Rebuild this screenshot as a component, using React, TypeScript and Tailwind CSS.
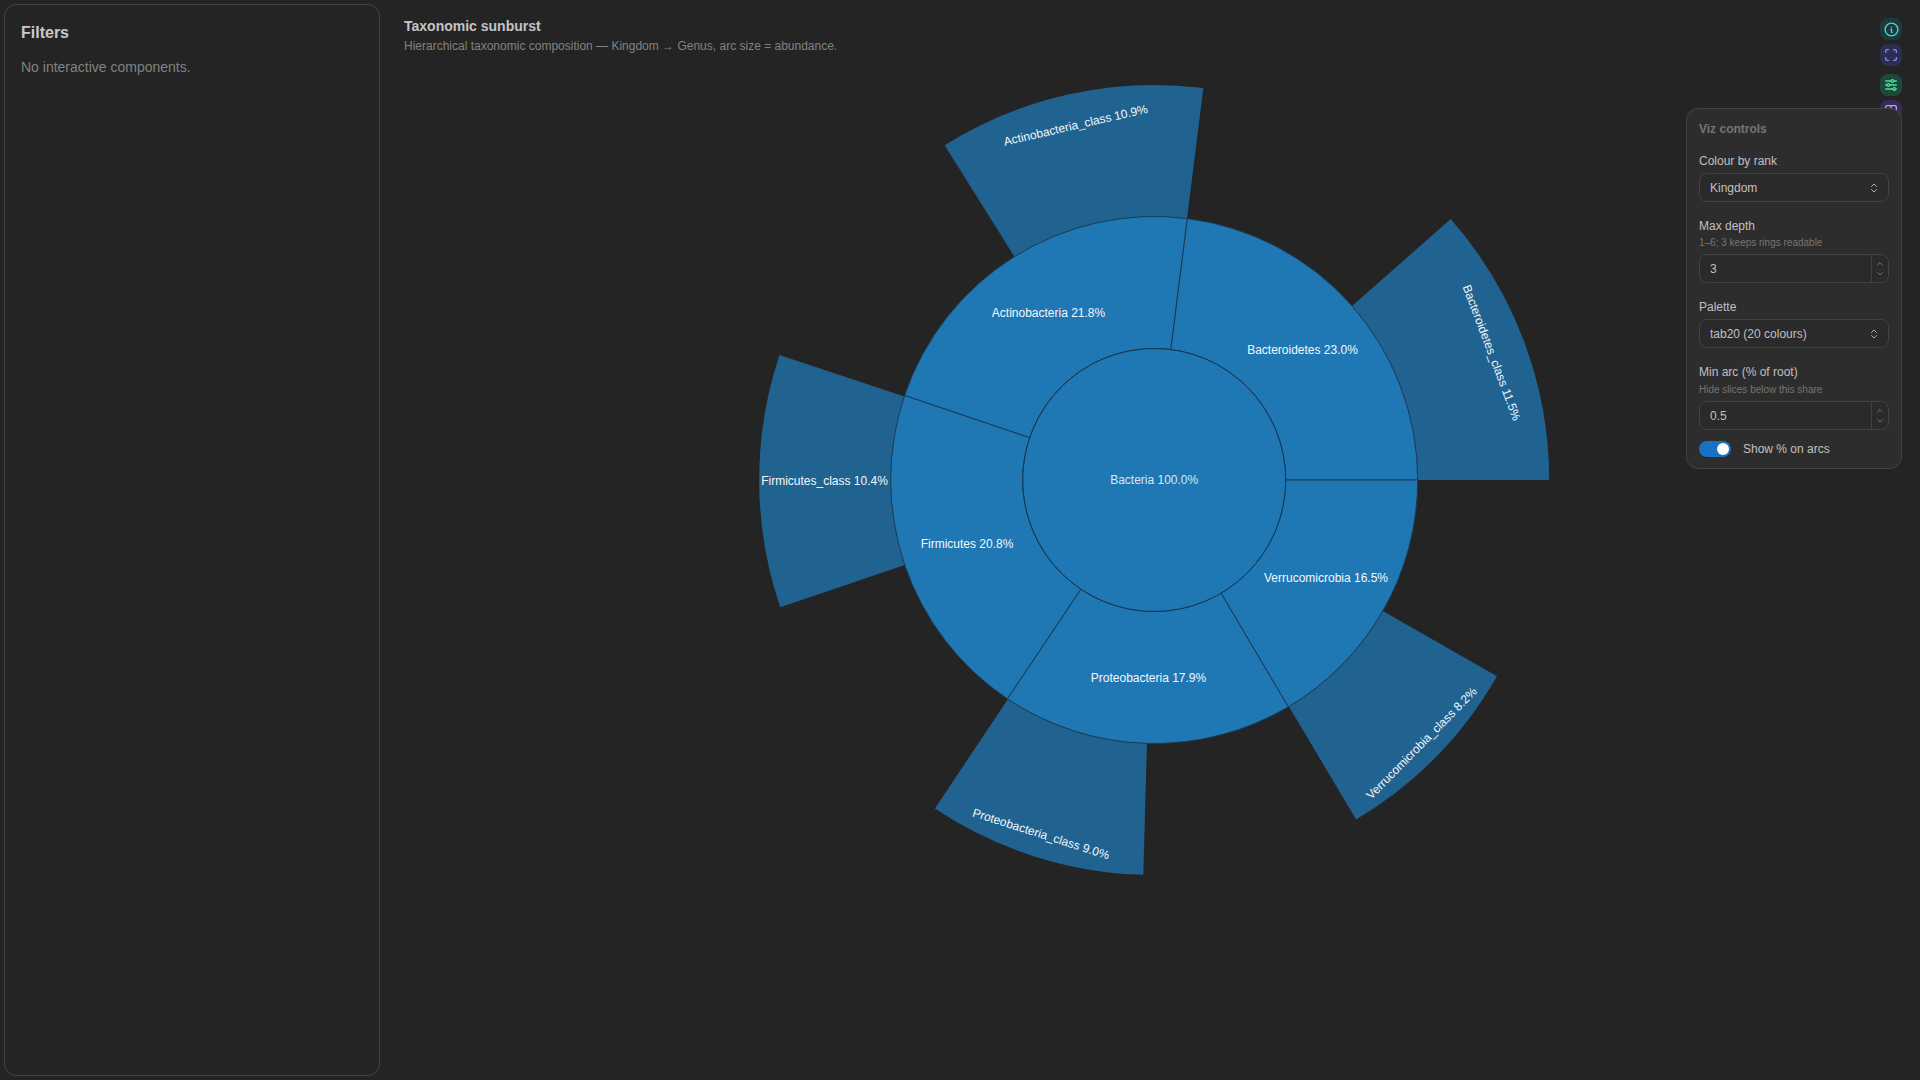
import { ChevronDown, ChevronUp, ChevronsUpDown } from 'lucide-react';
import { TbAdjustmentsHorizontal, TbInfoCircle, TbLayoutColumns, TbMaximize } from 'react-icons/tb';

const CX = 1154.2;
const CY = 480;
const R0 = 131.5;
const R1 = 263.5;
const R2 = 395;

// angles in degrees, counter-clockwise from 3 o'clock
const phyla = [
  { from: 0, to: 82.8 },
  { from: 82.8, to: 161.28 },
  { from: 161.28, to: 236.16 },
  { from: 236.16, to: 300.6 },
  { from: 300.6, to: 360 },
];

const classes = [
  { from: 0, to: 41.35 },
  { from: 82.85, to: 122.04 },
  { from: 161.55, to: 198.8 },
  { from: 236.27, to: 268.42 },
  { from: 300.74, to: 330.2 },
];

const labels = [
  { text: 'Bacteria 100.0%', x: 1154.2, y: 480, rot: 0 },
  { text: 'Bacteroidetes 23.0%', x: 1302.5, y: 349.5, rot: 0 },
  { text: 'Actinobacteria 21.8%', x: 1048.5, y: 312.5, rot: 0 },
  { text: 'Firmicutes 20.8%', x: 967, y: 543.5, rot: 0 },
  { text: 'Proteobacteria 17.9%', x: 1148.5, y: 678, rot: 0 },
  { text: 'Verrucomicrobia 16.5%', x: 1326, y: 577.5, rot: 0 },
  { text: 'Bacteroidetes_class 11.5%', x: 1491.7, y: 352.7, rot: 69.3 },
  { text: 'Actinobacteria_class 10.9%', x: 1075.7, y: 125.2, rot: -13 },
  { text: 'Firmicutes_class 10.4%', x: 824.5, y: 480.5, rot: 0 },
  { text: 'Proteobacteria_class 9.0%', x: 1041, y: 834, rot: 17.64 },
  { text: 'Verrucomicrobia_class 8.2%', x: 1421.7, y: 743.3, rot: -45.36 },
];

function pt(r: number, deg: number) {
  const a = (deg * Math.PI) / 180;
  return `${(CX + r * Math.cos(a)).toFixed(2)} ${(CY - r * Math.sin(a)).toFixed(2)}`;
}

function wedge(r1: number, r2: number, from: number, to: number) {
  const large = to - from > 180 ? 1 : 0;
  return `M${pt(r1, from)} L${pt(r2, from)} A${r2} ${r2} 0 ${large} 0 ${pt(r2, to)} L${pt(r1, to)} A${r1} ${r1} 0 ${large} 1 ${pt(r1, from)} Z`;
}

function Sunburst() {
  return (
    <svg viewBox="404 60 1516 1020" className="block w-[1516px] h-[1020px]">
      {classes.map((c) => (
        <path key={c.from} d={wedge(R1, R2, c.from, c.to)} fill="#206290" />
      ))}
      {phyla.map((p) => (
        <path key={p.from} d={wedge(R0, R1, p.from, p.to)} fill="#1f77b4" stroke="#1c3c54" strokeWidth="1" />
      ))}
      <circle cx={CX} cy={CY} r={R0} fill="#1f77b4" stroke="#14364f" strokeWidth="1" />
      {labels.map((l) => (
        <text
          key={l.text}
          x={l.x}
          y={l.y}
          transform={l.rot ? `rotate(${l.rot} ${l.x} ${l.y})` : undefined}
          textAnchor="middle"
          dominantBaseline="central"
          fontSize="12"
          fill={l.text.startsWith('Bacteria') ? '#d6e8f4' : '#f4f8fb'}
        >
          {l.text}
        </text>
      ))}
    </svg>
  );
}

function SelectField({ value }: { value: string }) {
  return (
    <div className="flex items-center justify-between h-[29px] rounded-lg border border-[#424242] bg-[#2a2a2a] pl-2.5 pr-2 text-xs text-[#c0c0c0]">
      <span>{value}</span>
      <ChevronsUpDown size={12} className="text-[#aaaaaa]" />
    </div>
  );
}

function NumberField({ value }: { value: string }) {
  return (
    <div className="flex items-center h-[29px] rounded-lg border border-[#424242] bg-[#2a2a2a] text-xs text-[#c0c0c0]">
      <span className="flex-1 pl-2.5">{value}</span>
      <div className="flex flex-col items-center justify-between w-[17px] h-full py-1 border-l border-[#424242] text-[#888888]">
        <ChevronUp size={10} />
        <ChevronDown size={10} />
      </div>
    </div>
  );
}

function ToolButton({ className, children }: { className: string; children: React.ReactNode }) {
  return <div className={`flex items-center justify-center w-[22px] h-[22px] rounded-lg ${className}`}>{children}</div>;
}

export default function App() {
  return (
    <div className="relative flex h-screen overflow-hidden bg-[#242424] p-1 font-['Liberation_Sans',Arial,sans-serif]">
      <aside className="w-[376px] shrink-0 rounded-xl border border-[#424242] p-4 pt-[18px]">
        <h2 className="text-base font-semibold leading-[20px] text-[#c9c9c9]">Filters</h2>
        <p className="mt-[14px] text-sm text-[#828282]">No interactive components.</p>
      </aside>

      <main className="flex-1 -mr-1 -mt-1 pl-6">
        <div className="h-[60px] pt-[16px]">
          <h1 className="text-sm leading-[20px] font-semibold text-[#c4c4c4]">Taxonomic sunburst</h1>
          <p className="mt-0.5 text-xs leading-[16px] text-[#828282]">
            Hierarchical taxonomic composition — Kingdom → Genus, arc size = abundance.
          </p>
        </div>
        <Sunburst />
      </main>

      <div className="absolute top-[18px] right-[18px] flex flex-col">
        <ToolButton className="bg-[#1c3a3d] text-[#4fd1c5]">
          <TbInfoCircle size={17} />
        </ToolButton>
        <ToolButton className="mt-1 bg-[#2c2f54] text-[#8b8ff0]">
          <TbMaximize size={16} />
        </ToolButton>
        <ToolButton className="mt-2 bg-[#1b4a38] text-[#4ade9c]">
          <TbAdjustmentsHorizontal size={16} />
        </ToolButton>
        <ToolButton className="mt-1 bg-[#372c54] text-[#b69cf5]">
          <TbLayoutColumns size={16} />
        </ToolButton>
      </div>

      <div className="absolute top-[108px] right-[18px] w-[216px] rounded-xl border border-[#424242] bg-[#2d2d2d] p-3 pb-[11px] text-xs">
        <div className="font-semibold leading-4 text-[#757575]">Viz controls</div>

        <div className="mt-4 leading-4 text-[#c0c0c0]">Colour by rank</div>
        <div className="mt-1">
          <SelectField value="Kingdom" />
        </div>

        <div className="mt-4 leading-4 text-[#c0c0c0]">Max depth</div>
        <div className="mt-[3px] text-[10px] leading-3 text-[#757575]">1–6; 3 keeps rings readable</div>
        <div className="mt-[5px]">
          <NumberField value="3" />
        </div>

        <div className="mt-4 leading-4 text-[#c0c0c0]">Palette</div>
        <div className="mt-1">
          <SelectField value="tab20 (20 colours)" />
        </div>

        <div className="mt-4 leading-4 text-[#c0c0c0]">Min arc (% of root)</div>
        <div className="mt-1 text-[10px] leading-3 text-[#757575]">Hide slices below this share</div>
        <div className="mt-[5px]">
          <NumberField value="0.5" />
        </div>

        <div className="mt-[11px] flex items-center gap-3">
          <div className="flex items-center justify-end w-8 h-4 rounded-full bg-[#1971c2] pr-0.5">
            <div className="w-3 h-3 rounded-full bg-white" />
          </div>
          <span className="text-[#c0c0c0]">Show % on arcs</span>
        </div>
      </div>
    </div>
  );
}
